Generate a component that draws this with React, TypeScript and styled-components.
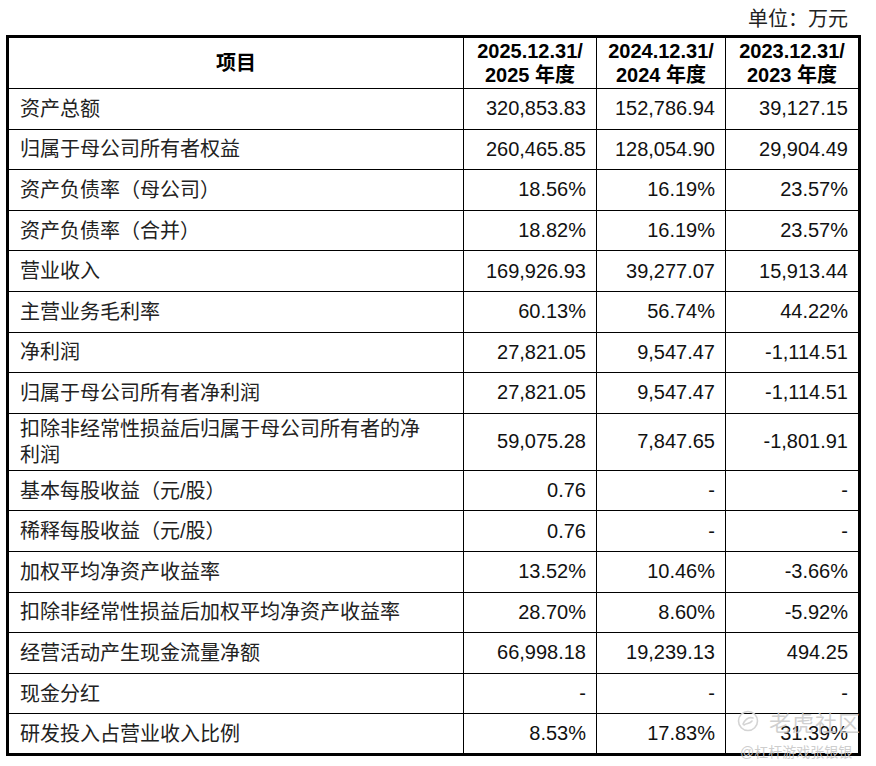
import React from 'react'
import styled, { createGlobalStyle } from 'styled-components'

const GlobalStyle = createGlobalStyle`
    body {
        margin: 0;
        background: #ffffff;
        font-family: "Liberation Sans", "Noto Sans CJK SC", sans-serif;
        color: #111;
    }
`

type Row = { label: string; values: [string, string, string]; tall?: boolean }

const rows: Row[] = [
    { label: '资产总额', values: ['320,853.83', '152,786.94', '39,127.15'] },
    { label: '归属于母公司所有者权益', values: ['260,465.85', '128,054.90', '29,904.49'] },
    { label: '资产负债率（母公司）', values: ['18.56%', '16.19%', '23.57%'] },
    { label: '资产负债率（合并）', values: ['18.82%', '16.19%', '23.57%'] },
    { label: '营业收入', values: ['169,926.93', '39,277.07', '15,913.44'] },
    { label: '主营业务毛利率', values: ['60.13%', '56.74%', '44.22%'] },
    { label: '净利润', values: ['27,821.05', '9,547.47', '-1,114.51'] },
    { label: '归属于母公司所有者净利润', values: ['27,821.05', '9,547.47', '-1,114.51'] },
    { label: '扣除非经常性损益后归属于母公司所有者的净利润', values: ['59,075.28', '7,847.65', '-1,801.91'], tall: true },
    { label: '基本每股收益（元/股）', values: ['0.76', '-', '-'] },
    { label: '稀释每股收益（元/股）', values: ['0.76', '-', '-'] },
    { label: '加权平均净资产收益率', values: ['13.52%', '10.46%', '-3.66%'] },
    { label: '扣除非经常性损益后加权平均净资产收益率', values: ['28.70%', '8.60%', '-5.92%'] },
    { label: '经营活动产生现金流量净额', values: ['66,998.18', '19,239.13', '494.25'] },
    { label: '现金分红', values: ['-', '-', '-'] },
    { label: '研发投入占营业收入比例', values: ['8.53%', '17.83%', '31.39%'] },
]

const periods = [
    ['2025.12.31/', '2025 年度'],
    ['2024.12.31/', '2024 年度'],
    ['2023.12.31/', '2023 年度'],
]

export default function App() {
    return (
        <>
            <GlobalStyle />
            <Page>
                <Unit>单位：万元</Unit>
                <Table>
                    <colgroup>
                        <col style={{ width: 456 }} />
                        <col style={{ width: 133 }} />
                        <col style={{ width: 129 }} />
                        <col style={{ width: 134 }} />
                    </colgroup>
                    <thead>
                        <tr>
                            <HeadCell>项目</HeadCell>
                            {periods.map(([date, year]) => (
                                <HeadCell key={date}>
                                    {date}
                                    <br />
                                    {year}
                                </HeadCell>
                            ))}
                        </tr>
                    </thead>
                    <tbody>
                        {rows.map((row) => (
                            <BodyRow key={row.label} $tall={row.tall}>
                                <Label>{row.label}</Label>
                                {row.values.map((v, i) => (
                                    <Value key={i}>{v}</Value>
                                ))}
                            </BodyRow>
                        ))}
                    </tbody>
                </Table>
                <Watermark>
                    <Brand>
                        <svg width="22" height="22" viewBox="0 0 22 22">
                            <circle cx="11" cy="11" r="9.5" fill="none" stroke="#d4d4d4" strokeWidth="1.6" />
                            <path d="M6 14 C9 8, 13 7, 16 8 M7 15 C10 13, 13 14, 15 11" fill="none" stroke="#d4d4d4" strokeWidth="1.6" strokeLinecap="round" />
                        </svg>
                        <BrandName>老虎社区</BrandName>
                    </Brand>
                    <Handle>@杠杆游戏张银银</Handle>
                </Watermark>
            </Page>
        </>
    )
}

const Page = styled.div`
    position: relative;
    width: 876px;
    height: 766px;
    padding: 0 0 0 6px;
    box-sizing: border-box;
    overflow: hidden;
`

const Unit = styled.div`
    height: 35px;
    width: 842px;
    display: flex;
    align-items: center;
    justify-content: flex-end;
    font-family: "Liberation Serif", "Noto Sans CJK SC", serif;
    font-size: 20px;
    color: #222;
`

const Table = styled.table`
    width: 855px;
    table-layout: fixed;
    border-collapse: collapse;
    border: 3px solid #000;
`

const HeadCell = styled.th`
    height: 50px;
    padding: 0;
    border: 1px solid #000;
    font-size: 20px;
    font-weight: 700;
    line-height: 24px;
    text-align: center;
    color: #000;
`

const BodyRow = styled.tr<{ $tall?: boolean }>`
    height: ${(p) => (p.$tall ? '57px' : '40.6px')};
`

const Label = styled.td`
    padding: 0 28px 0 11px;
    border: 1px solid #000;
    font-size: 20px;
    line-height: 26px;
    color: #222;
    vertical-align: middle;
`

const Value = styled.td`
    padding: 0 10px 0 4px;
    border: 1px solid #000;
    font-size: 20px;
    text-align: right;
    color: #111;
    vertical-align: middle;
`

const Watermark = styled.div`
    position: absolute;
    left: 737px;
    top: 705px;
    display: flex;
    flex-direction: column;
    gap: 4px;
    pointer-events: none;
`

const Brand = styled.div`
    display: flex;
    align-items: center;
    gap: 10px;
`

const BrandName = styled.span`
    font-size: 22px;
    letter-spacing: 1px;
    color: rgba(200, 200, 200, 0.85);
    white-space: nowrap;
`

const Handle = styled.span`
    padding-left: 3px;
    font-size: 14px;
    color: rgba(200, 200, 200, 0.9);
    white-space: nowrap;
`
